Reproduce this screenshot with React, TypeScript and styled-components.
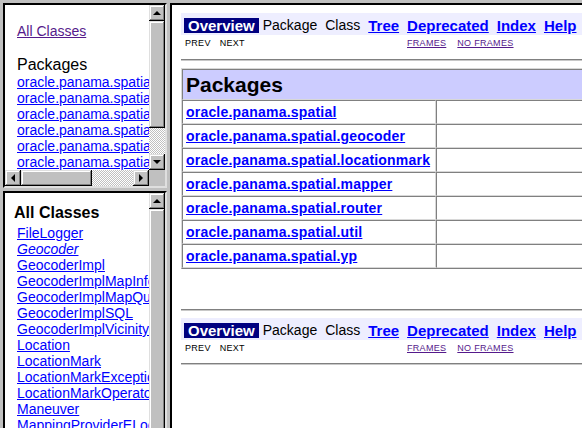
import React from 'react';
import styled, { createGlobalStyle, css } from 'styled-components';

const GlobalStyle = createGlobalStyle`
  html, body {
    margin: 0;
    padding: 0;
    background: #c0c0c0;
    overflow: hidden;
  }
  body {
    font-family: "Liberation Sans", Arial, sans-serif;
  }
`;

const packages = [
  'oracle.panama.spatial',
  'oracle.panama.spatial.geocoder',
  'oracle.panama.spatial.locationmark',
  'oracle.panama.spatial.mapper',
  'oracle.panama.spatial.router',
  'oracle.panama.spatial.util',
  'oracle.panama.spatial.yp',
];

const classes: { name: string; iface?: boolean }[] = [
  { name: 'FileLogger' },
  { name: 'Geocoder', iface: true },
  { name: 'GeocoderImpl' },
  { name: 'GeocoderImplMapInfo' },
  { name: 'GeocoderImplMapQuest' },
  { name: 'GeocoderImplSQL' },
  { name: 'GeocoderImplVicinity' },
  { name: 'Location' },
  { name: 'LocationMark' },
  { name: 'LocationMarkException' },
  { name: 'LocationMarkOperator' },
  { name: 'Maneuver' },
  { name: 'MappingProviderELocations' },
  { name: 'MappingProviderMapQuest' },
];

const FrameSet = styled.div`
  display: grid;
  grid-template-columns: 164px 430px;
  column-gap: 3px;
  padding: 3px 0 0 3px;
  width: 600px;
  height: 445px;
`;

const LeftColumn = styled.div`
  display: grid;
  grid-template-rows: 185px 1fr;
  row-gap: 3px;
  min-height: 0;
`;

const Frame = styled.div<{ $hscroll?: boolean }>`
  border: 2px solid;
  border-color: #000 #dfdfdf #dfdfdf #000;
  background: #fff;
  overflow: hidden;
  min-height: 0;
  display: grid;
  grid-template-columns: 1fr 16px;
  grid-template-rows: ${(p) => (p.$hscroll ? '1fr 16px' : '1fr')};
`;

const bevel = css`
  background: #c0c0c0;
  box-shadow: inset -1px -1px #000, inset 1px 1px #dfdfdf, inset -2px -2px #808080,
    inset 2px 2px #fff;
`;

const VBar = styled.div`
  display: flex;
  flex-direction: column;
  overflow: hidden;
  min-height: 0;
`;

const HBar = styled.div`
  display: flex;
  overflow: hidden;
`;

const ArrowButton = styled.div`
  ${bevel};
  flex: 0 0 16px;
  width: 16px;
  height: 16px;
  display: flex;
  align-items: center;
  justify-content: center;
`;

const Arrow = styled.span<{ $dir: 'up' | 'down' | 'left' | 'right' }>`
  width: 0;
  height: 0;
  ${(p) =>
    p.$dir === 'up'
      ? 'border-left: 4px solid transparent; border-right: 4px solid transparent; border-bottom: 4px solid #000; margin-top: -1px;'
      : p.$dir === 'down'
      ? 'border-left: 4px solid transparent; border-right: 4px solid transparent; border-top: 4px solid #000;'
      : p.$dir === 'left'
      ? 'border-top: 4px solid transparent; border-bottom: 4px solid transparent; border-right: 4px solid #000; margin-left: -1px;'
      : 'border-top: 4px solid transparent; border-bottom: 4px solid transparent; border-left: 4px solid #000;'}
`;

const Thumb = styled.div<{ $size: number }>`
  ${bevel};
  flex: 0 0 ${(p) => p.$size}px;
`;

const Track = styled.div`
  flex: 1;
  background-color: #fff;
  background-image: repeating-conic-gradient(#c0c0c0 0 25%, #fff 0 50%);
  background-size: 2px 2px;
`;

const Corner = styled.div`
  background: #c0c0c0;
`;

const FrameBody = styled.div<{ $pad: string }>`
  padding: ${(p) => p.$pad};
  overflow: hidden;
  white-space: nowrap;
  min-height: 0;
  min-width: 0;
`;

const FrameLink = styled.a<{ $visited?: boolean; $italic?: boolean }>`
  display: block;
  font-size: 14px;
  line-height: 16px;
  color: ${(p) => (p.$visited ? '#551a8b' : '#0000ff')};
  font-style: ${(p) => (p.$italic ? 'italic' : 'normal')};
  text-decoration: underline;
  cursor: pointer;
`;

const FrameHeading = styled.div<{ $bold?: boolean }>`
  font-size: 16px;
  line-height: 18px;
  font-weight: ${(p) => (p.$bold ? 700 : 400)};
  color: #000;
`;

const ItemList = styled.div<{ $top: number; $indent: number }>`
  margin-top: ${(p) => p.$top}px;
  padding-left: ${(p) => p.$indent}px;
`;

const RightFrame = styled.div`
  border: 2px solid;
  border-color: #000 #dfdfdf #dfdfdf #000;
  border-right: none;
  background: #fff;
  overflow: hidden;
  padding: 8px 0 0 9px;
`;

const NavBar = styled.div`
  display: flex;
  align-items: center;
  background: #eeeeff;
  padding: 5px 3px 2px;
  white-space: nowrap;
`;

const NavCell = styled.span<{ $kind: 'active' | 'link' | 'plain' }>`
  display: block;
  height: 15px;
  line-height: 15px;
  padding: 0 4px;
  ${(p) =>
    p.$kind === 'active'
      ? 'background: #000080; color: #fff; font-weight: 700; font-size: 15px;'
      : p.$kind === 'link'
      ? 'color: #0000ff; font-weight: 700; font-size: 15px; text-decoration: underline;'
      : 'color: #000; font-size: 14px;'}
`;

const SubNav = styled.div`
  display: grid;
  grid-template-columns: 222px auto;
  padding: 3px 0 0 4px;
  font-size: 9px;
  line-height: 11px;
  letter-spacing: 0.3px;
  white-space: nowrap;
`;

const SubGroup = styled.div`
  display: flex;
  gap: 9px;
`;

const FramesGroup = styled.div`
  display: flex;
  gap: 11px;
`;

const SubText = styled.span`
  color: #000;
`;

const SubLink = styled.a`
  color: #551a8b;
  text-decoration: underline;
`;

const Rule = styled.div<{ $top: number }>`
  margin-top: ${(p) => p.$top}px;
  height: 0;
  border-top: 1px solid #808080;
  border-bottom: 1px solid #c8c8c8;
`;

const PackageTable = styled.table`
  margin-top: 7px;
  width: 100%;
  border-collapse: separate;
  border-spacing: 0;
  border: 1px solid;
  border-color: #d8d8d8 #808080 #808080 #d8d8d8;
`;

const Cell = styled.td<{ $head?: boolean; $first?: boolean }>`
  border: 1px solid;
  border-color: #808080 #d8d8d8 #d8d8d8 #808080;
  padding: 3px;
  white-space: nowrap;
  ${(p) =>
    p.$head
      ? 'background: #ccccff; font-size: 21px; line-height: 23px; font-weight: 700;'
      : 'font-size: 14px; line-height: 16px;'}
  ${(p) => (p.$first ? 'width: 246px;' : '')}
`;

const PackageLink = styled.a`
  color: #0000ff;
  font-weight: 700;
  letter-spacing: 0.2px;
  text-decoration: underline;
`;

const Navigation = ({ top }: { top: number }) => (
  <>
    <Rule $top={top} style={{ display: top ? 'block' : 'none' }} />
    <NavBar style={{ marginTop: top ? 7 : 0 }}>
      <NavCell $kind="active">Overview</NavCell>
      <NavCell $kind="plain">Package</NavCell>
      <NavCell $kind="plain">Class</NavCell>
      <NavCell $kind="link">Tree</NavCell>
      <NavCell $kind="link">Deprecated</NavCell>
      <NavCell $kind="link">Index</NavCell>
      <NavCell $kind="link">Help</NavCell>
    </NavBar>
    <SubNav>
      <SubGroup>
        <SubText>PREV</SubText>
        <SubText>NEXT</SubText>
      </SubGroup>
      <FramesGroup>
        <SubLink>FRAMES</SubLink>
        <SubLink>NO FRAMES</SubLink>
      </FramesGroup>
    </SubNav>
  </>
);

export default function App() {
  return (
    <>
      <GlobalStyle />
      <FrameSet>
        <LeftColumn>
          <Frame $hscroll>
            <FrameBody $pad="18px 0 0 12px">
              <FrameLink $visited>All Classes</FrameLink>
              <FrameHeading style={{ marginTop: 17 }}>Packages</FrameHeading>
              <ItemList $top={0} $indent={0}>
                {packages.map((p) => (
                  <FrameLink key={p}>{p}</FrameLink>
                ))}
              </ItemList>
            </FrameBody>
            <VBar>
              <ArrowButton>
                <Arrow $dir="up" />
              </ArrowButton>
              <Thumb $size={107} />
              <Track />
              <ArrowButton>
                <Arrow $dir="down" />
              </ArrowButton>
            </VBar>
            <HBar>
              <ArrowButton>
                <Arrow $dir="left" />
              </ArrowButton>
              <Thumb $size={71} />
              <Track />
              <ArrowButton>
                <Arrow $dir="right" />
              </ArrowButton>
            </HBar>
            <Corner />
          </Frame>
          <Frame>
            <FrameBody $pad="11px 0 0 9px">
              <FrameHeading $bold>All Classes</FrameHeading>
              <ItemList $top={3} $indent={3}>
                {classes.map((c) => (
                  <FrameLink key={c.name} $italic={c.iface}>
                    {c.name}
                  </FrameLink>
                ))}
              </ItemList>
            </FrameBody>
            <VBar>
              <ArrowButton>
                <Arrow $dir="up" />
              </ArrowButton>
              <Thumb $size={300} />
              <Track />
            </VBar>
          </Frame>
        </LeftColumn>
        <RightFrame>
          <Navigation top={0} />
          <Rule $top={10} />
          <PackageTable>
            <tbody>
              <tr>
                <Cell $head colSpan={2}>
                  Packages
                </Cell>
              </tr>
              {packages.map((p) => (
                <tr key={p}>
                  <Cell $first>
                    <PackageLink>{p}</PackageLink>
                  </Cell>
                  <Cell>&nbsp;</Cell>
                </tr>
              ))}
            </tbody>
          </PackageTable>
          <Navigation top={40} />
          <Rule $top={9} />
        </RightFrame>
      </FrameSet>
    </>
  );
}
